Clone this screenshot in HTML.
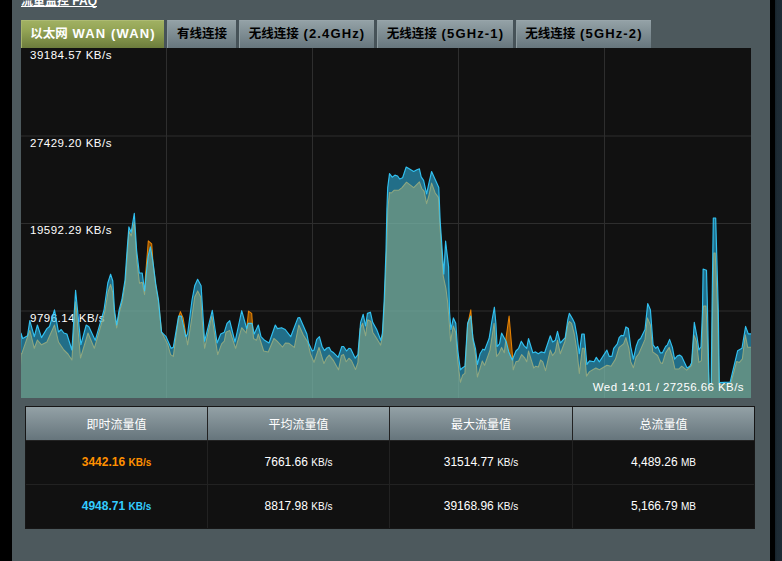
<!DOCTYPE html>
<html lang="zh-CN"><head><meta charset="utf-8"><title>Traffic Monitor</title>
<style>
html,body{margin:0;padding:0}
body{width:782px;height:561px;overflow:hidden;position:relative;background:#4d595d;font-family:"Liberation Sans","Noto Sans CJK SC",sans-serif;color:#fff}
.abs{position:absolute}
.cj{display:inline-block;vertical-align:baseline;overflow:visible;white-space:nowrap;text-align:center;font-family:"Liberation Sans","Noto Sans CJK SC",sans-serif}
#lstrip{left:0;top:0;width:12px;height:561px;background:#000}
#rstrip1{left:770px;top:0;width:5px;height:561px;background:#000}
#rstrip2{left:775px;top:0;width:7px;height:561px;background:linear-gradient(90deg,#16222a 0,#1d2a33 2px,#1e2b35 100%)}
#faq{left:21px;top:-7px;line-height:16px;font-size:12px;font-weight:bold;color:#fff;white-space:nowrap;border-bottom:1px solid #fff;height:13px}
.tab{top:20px;height:28px;box-sizing:border-box;line-height:26px;font-size:13px;font-weight:bold;color:#000;text-align:center;white-space:nowrap;
 background:linear-gradient(180deg,#93a1a6 0%,#67767d 100%);border-top:1px solid #98a5aa;border-left:1px solid #8e9ca1}
.tab.on{color:#fff;background:linear-gradient(180deg,#a0b062 0%,#93a455 35%,#6c7c3c 100%);border-top:1px solid #adbb72;border-left:1px solid #a6b56b}
.tab .lt{letter-spacing:1.15px}
#chart{left:21px;top:48px;width:730px;height:350px;background:#111;overflow:hidden}
#chart svg.g{position:absolute;left:0;top:0}
.yl{position:absolute;left:9px;font-size:11.5px;line-height:14px;color:#fff;white-space:nowrap;letter-spacing:.5px}
#tbl{left:25px;top:406px;width:730px;height:123px;background:#222;box-shadow:inset 0 0 0 1px #161616}
.c{position:absolute;box-sizing:border-box;text-align:center;white-space:nowrap}
.h{background:linear-gradient(180deg,#93a1a6 0%,#66757c 100%);height:33px;line-height:33px;top:1px}
.d{background:#111;height:43px;line-height:43px;font-size:12px;color:#fff}
.d small{font-size:10px}
.rx{color:#ff9000;font-weight:bold}
.tx{color:#33ccff;font-weight:bold}
</style></head><body>
<div class="abs" id="lstrip"></div>
<div class="abs" id="faq"><span class="cj" style="width:48px;font-size:12px;color:#fff">流量监控</span> FAQ</div>
<div class="abs" style="left:21px;top:20px;width:630px;height:28px;background:#465258"></div><div class="abs tab on" style="left:21px;width:143px"><span class="cj" style="width:37.5px;font-size:12.5px;color:#fff">以太网</span><span class="lt"> WAN (WAN)</span></div><div class="abs tab" style="left:167px;width:69px"><span class="cj" style="width:50px;font-size:12.5px;color:#000">有线连接</span></div><div class="abs tab" style="left:239px;width:135px"><span class="cj" style="width:50px;font-size:12.5px;color:#000">无线连接</span><span class="lt"> (2.4GHz)</span></div><div class="abs tab" style="left:377px;width:136px"><span class="cj" style="width:50px;font-size:12.5px;color:#000">无线连接</span><span class="lt"> (5GHz-1)</span></div><div class="abs tab" style="left:516px;width:135px"><span class="cj" style="width:50px;font-size:12.5px;color:#000">无线连接</span><span class="lt"> (5GHz-2)</span></div>
<div class="abs" id="chart"><div class="yl" style="top:0.3px">39184.57 KB/s</div><div class="yl" style="top:87.8px">27429.20 KB/s</div><div class="yl" style="top:175.3px">19592.29 KB/s</div><div class="yl" style="top:262.8px">9796.14 KB/s</div><svg class="g" width="730" height="350" viewBox="0 0 730 350">
<g stroke="#2e2e2e" stroke-width="1"><line x1="0" x2="730" y1="88.0" y2="88.0"/><line x1="0" x2="730" y1="175.5" y2="175.5"/><line x1="0" x2="730" y1="263.0" y2="263.0"/><line x1="145.5" x2="145.5" y1="0" y2="350"/><line x1="291.5" x2="291.5" y1="0" y2="350"/><line x1="437.5" x2="437.5" y1="0" y2="350"/><line x1="583.5" x2="583.5" y1="0" y2="350"/></g>
<path d="M-2 353 L0 305.7 L0.8 305.7 L8.8 282.4 L13.3 300.3 L16.4 292 L20.5 296.8 L25.9 294 L33.5 277 L37.5 294 L42.9 302 L47 306 L50.9 312 L54.6 253.8 L59.5 310 L67 285 L73.3 300.3 L83.8 264 L87 244 L89.6 236.4 L91.6 244 L93.2 264 L95.7 280 L98.4 264 L101.2 254 L104.4 234 L106.5 204 L107.9 183 L110.2 188 L113.3 174 L115.8 212.7 L118.5 235.3 L121.2 234.2 L123.6 246.6 L124.4 228.9 L126.6 202 L127.3 192.8 L130.7 195.9 L132.1 216 L134.8 238 L137.5 254 L140.6 284.2 L146.9 296.8 L149.6 306.6 L152.3 308.4 L157.6 269 L159.4 263.6 L162.1 270 L164.8 286 L166.6 296.8 L170.5 272 L173.7 249 L176.7 242.9 L179.7 249 L181.2 272 L183.6 300.3 L190.8 268 L196.7 306.6 L200.6 295.9 L203.3 293.2 L205 284.2 L208.7 282.4 L214.6 300.3 L220.7 279.7 L225.3 285 L227.5 263.1 L230.7 265.4 L232.5 290.5 L235.5 292.3 L237.3 286 L242.7 303 L247.2 304 L252.9 290.5 L256.1 293.2 L261.5 299 L264.4 295 L268 295.3 L273.3 299.4 L277.8 277 L282.3 287 L286.7 294 L289.4 305.7 L293 314.3 L298 299.4 L302.9 315.5 L305.5 310.2 L308.2 307.1 L312.7 312.9 L317.5 321.8 L320.4 307.5 L322.6 306.6 L325.2 313.8 L327.9 310.2 L330.6 312.9 L334.5 321.5 L336.9 314.7 L339.2 280.6 L341.7 275.3 L344.6 287.8 L346.7 271.7 L349.9 273.5 L351.7 284.2 L355.7 290.5 L359.6 297.1 L361.6 287.8 L363.6 252 L365.6 202 L366.8 161 L368.5 144.6 L370.3 145 L373 142.3 L377.5 142.3 L381 139.6 L385.5 134.2 L389.1 136.9 L392.7 139.6 L398.4 133.9 L400.8 140.5 L403.1 143.2 L405.6 155.7 L407.9 147.6 L410.6 135.1 L414.2 145 L417.4 149.4 L418.7 173.6 L419.9 192 L422.2 227.8 L424.9 240.3 L426.7 254.7 L428.5 278 L429.6 293.2 L432.3 278 L434.6 284.2 L436.7 312.9 L439.4 334.3 L441.6 327.2 L443.9 325.4 L446.6 277 L449.8 261.8 L452 292.3 L454.6 308.4 L456.4 329 L461.3 312.9 L463.6 317.3 L469 302.1 L473.1 275.3 L475.6 308.4 L477.9 305.7 L480.6 299.4 L483.3 304.8 L485.1 289.6 L488.1 268.1 L491.7 310.2 L492.2 321.8 L494.9 313.8 L497.6 312.9 L500.7 306.6 L503.9 310.2 L505.7 313.8 L507.5 303 L512.8 320 L514.6 318.2 L517.3 319.1 L519.6 312 L521.8 313.8 L524.5 322.7 L529.3 302.1 L531.6 307.5 L534.3 303.9 L536.5 292.3 L539.3 305.7 L544 293.2 L546.8 277 L548.3 273.5 L550.6 275.3 L553.3 286 L556 303 L558.3 325.4 L561.4 300.3 L563.2 300.3 L565.5 328.1 L568.5 323.6 L574.8 320 L578.4 321.8 L585.9 317.3 L590 318.2 L594.5 311.1 L598.1 299.4 L602.6 295.9 L604.9 289.6 L607.9 300.3 L609.7 313.8 L612.4 319.7 L615.1 309.3 L617.8 305.7 L624 291.4 L626.4 269.9 L629.4 277 L631.7 303.9 L636.6 307.5 L639.6 314.7 L641.4 315.5 L644.6 304.8 L648.2 299.4 L651.4 309.3 L653.9 320.9 L658 320.9 L660.7 318.2 L665.7 322.2 L670.6 317.3 L672.9 286.9 L675.4 293.2 L677.9 314.4 L680.4 312.6 L682 264 L682.6 257.9 L685 257.9 L686 282 L688 337 L690.4 337 L691.6 262 L692.8 204.9 L694.2 204.9 L696.6 262 L697.6 312 L698 336.5 L709.6 336 L715.7 313.5 L718.4 314.4 L721.4 310.9 L724.3 286.8 L726.7 299.3 L730 299.3 L732 299.3 L732 353Z" fill="#ff9000" fill-opacity=".5" stroke="#fa8c00" stroke-width="1.05" stroke-opacity=".9" stroke-linejoin="round"/>
<path d="M-2 353 L0 285.1 L1.7 290.5 L6.5 287.8 L8.8 272.6 L13.3 288.7 L16.4 277 L20.5 289.6 L25.9 280.6 L28.5 278.5 L33.5 261.8 L37.5 284 L40.2 281.5 L42.9 285 L45.9 286 L50.9 302 L54.6 242.4 L59.9 296.7 L65.2 277 L67.9 278.8 L74.2 292.3 L83 262 L86.8 235 L89.6 226.2 L91.8 233 L93.5 262 L95.7 277 L98.1 262 L100.8 252 L104 232 L106.1 202 L107.9 178.9 L110.2 184.2 L113.3 165.4 L115.6 202 L118.3 225 L121.2 225 L123.6 242.8 L125.5 223.5 L127.1 208.4 L129.4 198.9 L132.1 214.7 L134.8 236 L137.5 252 L140.6 284.2 L145.1 288.7 L150.1 300.3 L152.3 299.4 L157.6 268.1 L160.3 268 L164.8 288.7 L166.6 286 L171 252 L173.7 237.8 L176.6 231.3 L180.1 237.8 L181 252 L183.6 293.2 L191.3 262.4 L196.1 295 L199.7 286 L203.3 284.2 L206 275.3 L208.7 272.6 L214 294 L220.7 262.7 L225.7 280.6 L227.1 275.3 L231 275.3 L233.2 286 L237.3 277 L240 288.7 L243.6 292.3 L248 295 L254.3 277 L256.5 280.6 L260.6 279.7 L264.2 281.5 L269.7 288.7 L276.9 269.9 L278.7 269.5 L285.9 286 L287.6 295 L291.2 303 L293 302 L295.7 291.4 L298.4 288.7 L301.1 298.5 L303.4 302.5 L305.9 300 L308.2 299.4 L310 303 L312.7 304.8 L317.2 309.3 L320.8 298.5 L322.6 298.5 L325.6 303 L327.9 300.3 L329.7 300.7 L334.2 310.2 L336.9 306.6 L339.6 274.4 L342.2 266.3 L344.6 278 L346.4 265.4 L349.4 264.2 L351.7 274.4 L355.7 281.5 L359.8 292.3 L361.4 285.1 L363.2 252 L365 202 L365.9 161 L366.7 139.6 L368.5 125.6 L371.2 129.2 L373.9 127.1 L376.6 128 L378.7 131 L381.6 129.7 L385.2 119 L388.2 120.8 L392.7 123.5 L395.9 121.7 L398.4 120.8 L400.2 128.9 L402.6 132.4 L405.6 145.9 L407.9 135.1 L410.6 123.5 L414.2 131.5 L417.8 139.6 L419.2 173.6 L420.5 192 L422.8 226 L424.6 193 L427.6 218.9 L428.5 263.6 L429.9 281.5 L432.4 269.9 L434.8 275.2 L436.7 302.1 L439.4 321.8 L441.2 320 L443.9 318.2 L446.6 275.3 L449.8 268.1 L452 290.5 L454.6 301.2 L456.4 316.4 L459.1 305.7 L461.8 301.2 L463.6 302.1 L468.1 290.5 L470.8 273.5 L473.4 259.2 L474.9 275.3 L476.1 298.5 L478.5 295.9 L480.6 285.1 L485.1 293.2 L487.8 303.9 L491.3 312 L494.9 303 L497.6 300.3 L500.3 293.2 L503 297.6 L505.7 300.3 L507.5 290.5 L511.9 304.8 L514.6 303.9 L517.3 305.7 L520 303.9 L523.6 304.8 L529.3 287.8 L531.6 294 L534.3 292.3 L536.5 283.3 L539.3 295 L544.2 289.6 L546.8 271.7 L548.3 265.4 L551.5 270.8 L553.7 275.3 L556 287.8 L558.3 305.7 L560.8 286 L563.2 286 L565.9 316.4 L568.5 312.9 L573 313.8 L575.3 309.3 L578.4 313.8 L585.9 302.1 L588.2 308.4 L590.9 308.4 L592.7 300.3 L596.3 295.9 L598.1 289.6 L600.2 287.4 L602.6 287.8 L604.9 278.9 L607.4 280.6 L609.7 298.5 L612.4 311.1 L615.1 298.5 L617.4 292.3 L619.6 290.5 L624 281.5 L626.7 255.6 L629.4 261.8 L632.1 296.8 L634.8 300.3 L636.6 298.5 L639.3 304.8 L641.4 304.8 L644.6 298.5 L646.4 296.8 L648.6 291.4 L651.4 299.4 L653.6 311.1 L656.3 307.9 L658.6 307.1 L660.7 308.4 L666.1 320 L668.8 318.2 L670.6 314.7 L673.3 274.4 L676 288.7 L677.9 301.9 L680 298.7 L681.5 262 L682.1 221 L685.5 222.2 L686.5 262 L688 335.8 L690.2 335.8 L691 262 L692.3 170 L694.7 170 L697.3 262 L698 312 L698.3 334.6 L709.2 334 L716.6 302.8 L721 300.2 L724.6 278.4 L727.3 285.9 L730 285.9 L732 285.9 L732 353Z" fill="#33ccff" fill-opacity=".5" stroke="#33ccff" stroke-width="1.15" stroke-opacity=".92" stroke-linejoin="round"/>
</svg><div class="yl" style="left:auto;right:7px;top:332px;letter-spacing:.43px">Wed 14:01 / 27256.66 KB/s</div></div>
<div class="abs" id="tbl"><div class="c h" style="left:1px;width:181px;"><span class="cj" style="width:60px;font-size:12px;color:#fff">即时流量值</span></div><div class="c h" style="left:183px;width:181px;"><span class="cj" style="width:60px;font-size:12px;color:#fff">平均流量值</span></div><div class="c h" style="left:365px;width:182px;"><span class="cj" style="width:60px;font-size:12px;color:#fff">最大流量值</span></div><div class="c h" style="left:548px;width:181px;"><span class="cj" style="width:48px;font-size:12px;color:#fff">总流量值</span></div><div class="c d" style="left:1px;width:181px;top:35px;"><span class="rx">3442.16 <small>KB/s</small></span></div><div class="c d" style="left:183px;width:181px;top:35px;">7661.66 <small>KB/s</small></div><div class="c d" style="left:365px;width:182px;top:35px;">31514.77 <small>KB/s</small></div><div class="c d" style="left:548px;width:181px;top:35px;">4,489.26 <small>MB</small></div><div class="c d" style="left:1px;width:181px;top:79px;"><span class="tx">4948.71 <small>KB/s</small></span></div><div class="c d" style="left:183px;width:181px;top:79px;">8817.98 <small>KB/s</small></div><div class="c d" style="left:365px;width:182px;top:79px;">39168.96 <small>KB/s</small></div><div class="c d" style="left:548px;width:181px;top:79px;">5,166.79 <small>MB</small></div></div>
<div class="abs" id="rstrip1"></div><div class="abs" id="rstrip2"></div>
</body></html>
